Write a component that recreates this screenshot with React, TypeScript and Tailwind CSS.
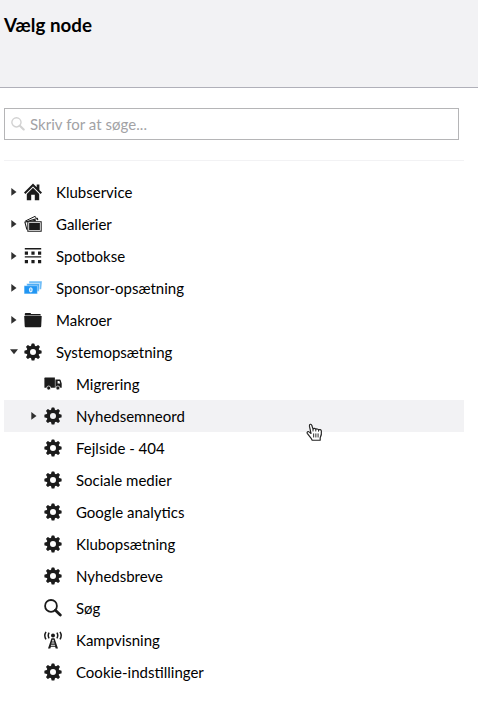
import React from 'react';

type IconName = 'home' | 'pictures' | 'thumbs' | 'bills' | 'folder' | 'gear' | 'truck' | 'search' | 'tower';

function Gear() {
  return (
    <>
      {[0, 45, 90, 135, 180, 225, 270, 315].map((a) => (
        <path key={a} d="M6.8 4 7.5 .9Q7.6.4 8.1.4H9.9Q10.4.4 10.5.9L11.2 4Z" transform={`rotate(${a} 9 9)`} />
      ))}
      <path fillRule="evenodd" d="M9 2.6a6.4 6.4 0 1 1 0 12.8a6.4 6.4 0 1 1 0-12.8ZM9 6a3 3 0 1 0 0 6a3 3 0 1 0 0-6Z" />
    </>
  );
}

const shapes: Record<IconName, React.ReactNode> = {
  gear: <Gear />,
  home: (
    <>
      <path d="M0 9.5 9 .5l3.7 3.7V1.6h2.7v5.3l2.6 2.6-1.4 1.4L9 3.6l-7.6 7.3Z" />
      <path d="M2.8 11 9 4.8l6.2 6.2v6.2h-4.4v-5.4H7.2v5.4H2.8Z" />
    </>
  ),
  pictures: (
    <>
      <path d="M1.2 6.1 11.1 1.3l1 1.7" fill="none" stroke="currentColor" strokeWidth="1" />
      <path d="M2.9 14.6.9 7.1 13.4 3.5l.4 1.7" fill="none" stroke="currentColor" strokeWidth="1.1" />
      <path d="M5.6 6.2 11.2 4.7l1.3 1.5Z" />
      <path fillRule="evenodd" d="M3.3 6.2h14.4v10.6H3.3ZM4.3 7.2v8.6h12.4V7.2Z" />
      <path d="M5.1 8h10.8v7H5.1Z" />
    </>
  ),
  thumbs: (
    <>
      <path d="M.8 1h16.4v1.4H.8ZM.8 9.2h16.4v1.4H.8Z" />
      <path d="M.8 4.6H4v3.2H.8ZM7.4 4.6h3.2v3.2H7.4ZM14 4.6h3.2v3.2H14ZM.8 13H4v3.2H.8ZM7.4 13h3.2v3.2H7.4ZM14 13h3.2v3.2H14Z" />
    </>
  ),
  bills: (
    <>
      <path d="M5.2 2.3h12.7l-.7 8H5.2Z" fill="#6dbcf7" />
      <path d="M2.7 4.4h13l-.6 8H2.7Z" fill="#4dacf5" stroke="#fff" strokeWidth=".6" />
      <path d="M.1 6.7h13.3v8.2H.1Z" fill="#2196f3" stroke="#fff" strokeWidth=".4" />
      <ellipse cx="6.8" cy="10.8" rx="1.9" ry="2.6" fill="#e6f4fe" />
      <path d="M6.3 9.5h1v2.6h-1Z" fill="#4ba5ef" />
    </>
  ),
  folder: (
    <path d="M.8 4.4V2.9Q.8 2 1.7 2H6.2Q7 2 7 2.8V3.1H15.9Q16.8 3.1 16.8 4V4.4ZM.2 5.1H17.7L17.2 15.3Q17.1 16.2 16.2 16.2H1.7Q.8 16.2.7 15.3Z" />
  ),
  truck: (
    <>
      <path d="M.4 3.2Q.4 2.6 1 2.6H10.9V12.8H.9Q.4 12.8.4 12.3Z" />
      <path fillRule="evenodd" d="M11.4 4.6h4.4q.6 0 .8.5l1.1 3.3v4.4h-6.3ZM13.6 6v2.6h2.6L15.4 6Z" />
      <circle cx="4.7" cy="13" r="2" stroke="#fff" strokeWidth=".7" />
      <circle cx="13.9" cy="13" r="2" stroke="#fff" strokeWidth=".7" />
    </>
  ),
  search: (
    <>
      <circle cx="7" cy="6.9" r="5.9" fill="none" stroke="currentColor" strokeWidth="1.8" />
      <path d="m11.4 11.3 4.9 4.7" stroke="currentColor" strokeWidth="2.8" strokeLinecap="round" />
    </>
  ),
  tower: (
    <>
      <circle cx="9" cy="4.6" r="2" />
      <path fill="none" stroke="currentColor" strokeWidth="1.5" d="M5.1 1.7q-1.7 2.8 0 5.6M12.9 1.7q1.7 2.8 0 5.6M2 .8q-2.4 3.8 0 7.6M16 .8q2.4 3.8 0 7.6" />
      <path fillRule="evenodd" d="M7.5 7.2h3L14 17.4h-2.3l-.6-1.6H6.9l-.6 1.6H4ZM8.5 8.8l-.5 1.6h2l-.5-1.6ZM7.7 11.5l-.3 1.1h3.2l-.3-1.1ZM7.1 13.7l-.3 1h4.4l-.3-1Z" />
    </>
  ),
};

function Icon({ name, className }: { name: IconName; className: string }) {
  return (
    <svg viewBox="0 0 18 18" fill="currentColor" className={className}>
      {shapes[name]}
    </svg>
  );
}

interface TreeNode {
  label: string;
  icon: IconName;
  arrow?: 'right' | 'down';
  child?: boolean;
  hover?: boolean;
}

const nodes: TreeNode[] = [
  { label: 'Klubservice', icon: 'home', arrow: 'right' },
  { label: 'Gallerier', icon: 'pictures', arrow: 'right' },
  { label: 'Spotbokse', icon: 'thumbs', arrow: 'right' },
  { label: 'Sponsor-opsætning', icon: 'bills', arrow: 'right' },
  { label: 'Makroer', icon: 'folder', arrow: 'right' },
  { label: 'Systemopsætning', icon: 'gear', arrow: 'down' },
  { label: 'Migrering', icon: 'truck', child: true },
  { label: 'Nyhedsemneord', icon: 'gear', arrow: 'right', child: true, hover: true },
  { label: 'Fejlside - 404', icon: 'gear', child: true },
  { label: 'Sociale medier', icon: 'gear', child: true },
  { label: 'Google analytics', icon: 'gear', child: true },
  { label: 'Klubopsætning', icon: 'gear', child: true },
  { label: 'Nyhedsbreve', icon: 'gear', child: true },
  { label: 'Søg', icon: 'search', child: true },
  { label: 'Kampvisning', icon: 'tower', child: true },
  { label: 'Cookie-indstillinger', icon: 'gear', child: true },
];

function HandCursor() {
  return (
    <svg viewBox="0 0 16 18" className="absolute left-[302px] top-[23px] h-[19px] w-[17px]">
      <path
        d="M5.8 16.3C5 14.1 2.6 11.8 1.1 9.8.5 8.4 2 7.5 3.2 8.6l1.5 1.3L3.2 3C2.9.9 5 .5 5.5 2.4l1.1 3.4c.5-1 2.3-.9 2.6.3.6-.8 2.3-.6 2.6.5.9-.8 2.6-.3 2.7 1 .3 2.3-.2 4.7-1.1 6.4v2.3Z"
        fill="#fff"
        stroke="#222"
        strokeWidth="1.1"
        strokeLinejoin="round"
      />
      <path d="M6.6 5.9v2.1M9.2 6.2v1.8M11.8 6.7v1.5M7.2 9.9v3.8M9.3 9.9v3.8M11.4 9.9v3.8" stroke="#222" strokeWidth=".9" />
    </svg>
  );
}

function Row({ node }: { node: TreeNode }) {
  return (
    <li
      className={`relative flex h-8 items-center ${node.child ? 'pl-[25px]' : 'pl-[5px]'} ${node.hover ? 'bg-[#f2f2f4]' : ''}`}
    >
      <svg viewBox="0 0 10 10" className="mr-[5px] h-2.5 w-2.5 shrink-0 fill-[#303030]">
        {node.arrow === 'right' && <path d="M2.3 1v7.8l5.2-3.9Z" />}
        {node.arrow === 'down' && <path d="M1 2.2h8L5 7.2Z" />}
      </svg>
      <Icon name={node.icon} className="h-[18px] w-[18px] shrink-0 text-[#1b1b1b]" />
      <span className="ml-3.5 whitespace-nowrap">{node.label}</span>
      {node.hover && <HandCursor />}
    </li>
  );
}

export default function App() {
  return (
    <div className="h-[725px] w-[478px] overflow-hidden bg-white font-[Lato,sans-serif] text-[15px] leading-5 text-black">
      <header className="h-[88px] border-b border-[#b0b0b9] bg-[#f2f2f4] pl-1 pt-3.5">
        <h1 className="text-[18.75px] font-bold leading-[21px]">Vælg node</h1>
      </header>
      <main className="ml-1 mr-3.5 pt-5">
        <label className="mr-[5px] flex h-8 items-center border border-[#b5b5b7] pl-[6px]">
          <Icon name="search" className="h-3.5 w-3.5 shrink-0 text-[#d2d2d2]" />
          <input
            type="text"
            placeholder="Skriv for at søge..."
            className="ml-[5px] w-80 bg-transparent tracking-[0.04px] outline-none placeholder:text-[#a2a2a5]"
          />
        </label>
        <hr className="mb-[15px] mt-5 border-[#f2f2f4]" />
        <ul>
          {nodes.map((n) => (
            <Row key={n.label} node={n} />
          ))}
        </ul>
      </main>
    </div>
  );
}
